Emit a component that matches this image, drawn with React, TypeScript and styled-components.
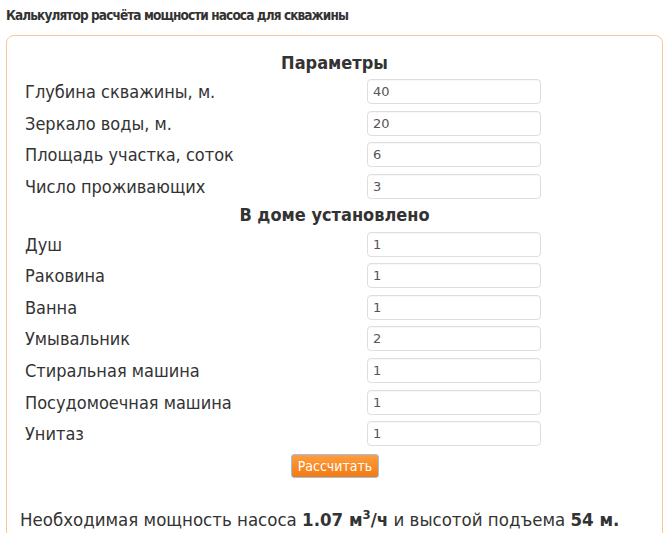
import React from 'react';
import styled, { createGlobalStyle } from 'styled-components';

const GlobalStyle = createGlobalStyle`
  body {
    margin: 0;
    background: #fff;
    font-family: "DejaVu Sans Condensed", "DejaVu Sans", sans-serif;
    color: #333;
  }
`;

const Page = styled.div`
  width: 670px;
  height: 533px;
  overflow: hidden;
  padding: 6px 7px 0 6px;
  box-sizing: border-box;
`;

const Title = styled.h1`
  margin: 0;
  font-size: 13.5px;
  line-height: 18px;
  letter-spacing: -0.9px;
  font-weight: bold;
  color: #333;
`;

const Box = styled.div`
  margin-top: 11px;
  border: 1px solid #f7c998;
  border-radius: 8px;
  padding: 14px 0 40px 0;
`;

const SectionTitle = styled.div`
  text-align: center;
  font-weight: bold;
  font-size: 18px;
  line-height: 26px;
  color: #333;
`;

const Grid = styled.div`
  display: grid;
  grid-template-columns: 342px 174px;
  grid-auto-rows: 31.6px;
  align-items: center;
  padding-left: 18px;
`;

const Label = styled.label`
  font-size: 18px;
  color: #333;
`;

const Field = styled.input`
  box-sizing: border-box;
  width: 174px;
  height: 25px;
  border: 1px solid #dedede;
  border-radius: 4px;
  padding: 0 5px;
  font-family: "DejaVu Sans", sans-serif;
  font-size: 13px;
  color: #555;
  background: #fff;
  box-shadow: inset 0 1px 1px rgba(0, 0, 0, 0.03);
`;

const ButtonRow = styled.div`
  display: flex;
  justify-content: center;
  margin-top: 4px;
  padding-left: 1px;
`;

const Button = styled.button`
  width: 88px;
  height: 24px;
  padding: 0;
  border: 1px solid #9cc2ea;
  border-radius: 3px;
  background: linear-gradient(#ff9d3f, #f27a12);
  color: #fff;
  font-family: "DejaVu Sans Condensed", "DejaVu Sans", sans-serif;
  font-size: 14px;
  cursor: pointer;
`;

const Result = styled.p`
  margin: 30px 0 0 13px;
  font-size: 18.5px;
  line-height: 24px;
  color: #333;
  white-space: nowrap;

  sup {
    font-size: 13px;
    line-height: 0;
  }
`;

type Row = { label: string; value: string };

const params: Row[] = [
  { label: 'Глубина скважины, м.', value: '40' },
  { label: 'Зеркало воды, м.', value: '20' },
  { label: 'Площадь участка, соток', value: '6' },
  { label: 'Число проживающих', value: '3' },
];

const fixtures: Row[] = [
  { label: 'Душ', value: '1' },
  { label: 'Раковина', value: '1' },
  { label: 'Ванна', value: '1' },
  { label: 'Умывальник', value: '2' },
  { label: 'Стиральная машина', value: '1' },
  { label: 'Посудомоечная машина', value: '1' },
  { label: 'Унитаз', value: '1' },
];

function Rows({ rows }: { rows: Row[] }) {
  return (
    <Grid>
      {rows.map((r) => (
        <React.Fragment key={r.label}>
          <Label>{r.label}</Label>
          <Field defaultValue={r.value} />
        </React.Fragment>
      ))}
    </Grid>
  );
}

export default function App() {
  return (
    <Page>
      <GlobalStyle />
      <Title>Калькулятор расчёта мощности насоса для скважины</Title>
      <Box>
        <SectionTitle>Параметры</SectionTitle>
        <Rows rows={params} />
        <SectionTitle>В доме установлено</SectionTitle>
        <Rows rows={fixtures} />
        <ButtonRow>
          <Button>Рассчитать</Button>
        </ButtonRow>
        <Result>
          Необходимая мощность насоса <b>1.07 м<sup>3</sup>/ч</b> и высотой подъема <b>54 м.</b>
        </Result>
      </Box>
    </Page>
  );
}
